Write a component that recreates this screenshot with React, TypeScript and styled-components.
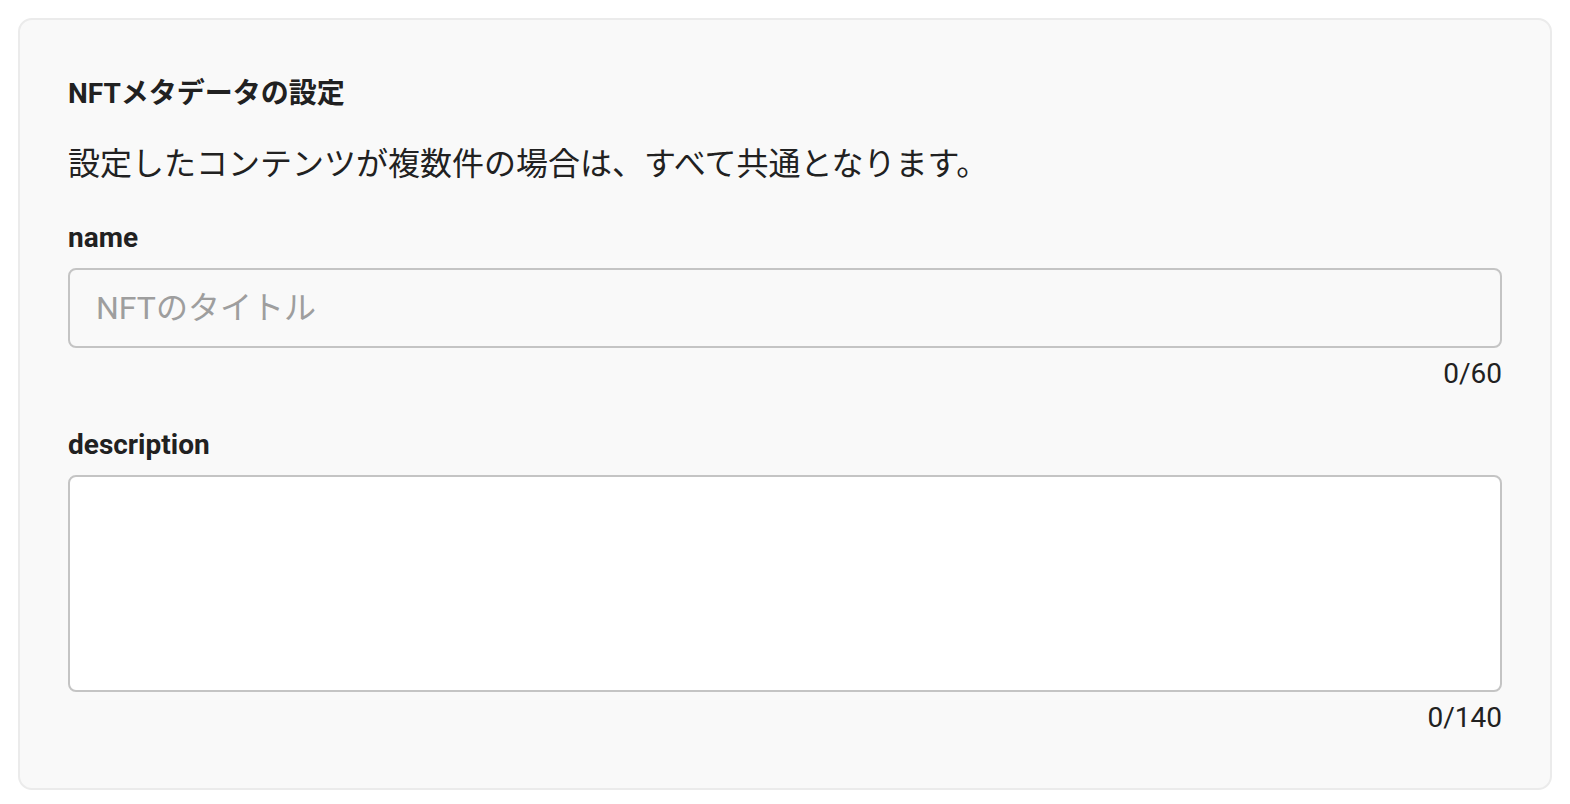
import styled, { createGlobalStyle } from 'styled-components'

const GlobalStyle = createGlobalStyle`
    html, body {
        margin: 0;
        padding: 0;
        background: #ffffff;
    }
    body {
        font-family: Roboto, 'Noto Sans CJK JP', sans-serif;
        color: #212121;
    }
`

const FONT = `font-family: Roboto, 'Noto Sans CJK JP', sans-serif;`

const Page = styled.div`
    padding: 18px;
    box-sizing: border-box;
    width: 1570px;
`

const Card = styled.section`
    box-sizing: border-box;
    width: 100%;
    background: #f9f9f9;
    border: 2px solid #ebebeb;
    border-radius: 14px;
    padding: 55px 48px 50px;
    display: flex;
    flex-direction: column;
`

const Title = styled.h3`
    ${FONT}
    margin: 0;
    font-size: 28px;
    line-height: 38px;
    font-weight: 700;
    color: #212121;
`

const Lead = styled.p`
    ${FONT}
    margin: 27px 0 0;
    font-size: 32px;
    line-height: 48px;
    font-weight: 400;
    color: #212121;
`

const Field = styled.div`
    display: flex;
    flex-direction: column;
    margin-top: 30px;

    & + & {
        margin-top: 31px;
    }
`

const Label = styled.label`
    ${FONT}
    font-size: 28px;
    line-height: 40px;
    font-weight: 700;
    color: #212121;
    margin-bottom: 10px;
`

const boxStyle = `
    ${FONT}
    box-sizing: border-box;
    width: 100%;
    border: 2px solid #c4c4c4;
    border-radius: 8px;
    color: #212121;
    outline: none;
    margin: 0;
`

const TextInput = styled.input`
    ${boxStyle}
    height: 80px;
    padding: 0 26px;
    font-size: 32px;
    background: #f9f9f9;

    &::placeholder {
        color: #9e9e9e;
    }
`

const TextArea = styled.textarea<{ $height: number }>`
    ${boxStyle}
    height: ${(p) => p.$height}px;
    padding: 20px 26px;
    font-size: 32px;
    background: #ffffff;
    resize: none;
    display: block;
`

const Counter = styled.div`
    ${FONT}
    align-self: flex-end;
    margin-top: 6px;
    font-size: 28px;
    line-height: 40px;
    color: #212121;
`

export default function App() {
    return (
        <>
            <GlobalStyle />
            <Page>
                <Card>
                    <Title>NFTメタデータの設定</Title>
                    <Lead>設定したコンテンツが複数件の場合は、すべて共通となります。</Lead>
                    <Field>
                        <Label>name</Label>
                        <TextInput placeholder="NFTのタイトル" />
                        <Counter>0/60</Counter>
                    </Field>
                    <Field>
                        <Label>description</Label>
                        <TextArea $height={217} />
                        <Counter>0/140</Counter>
                    </Field>
                </Card>
            </Page>
        </>
    )
}
